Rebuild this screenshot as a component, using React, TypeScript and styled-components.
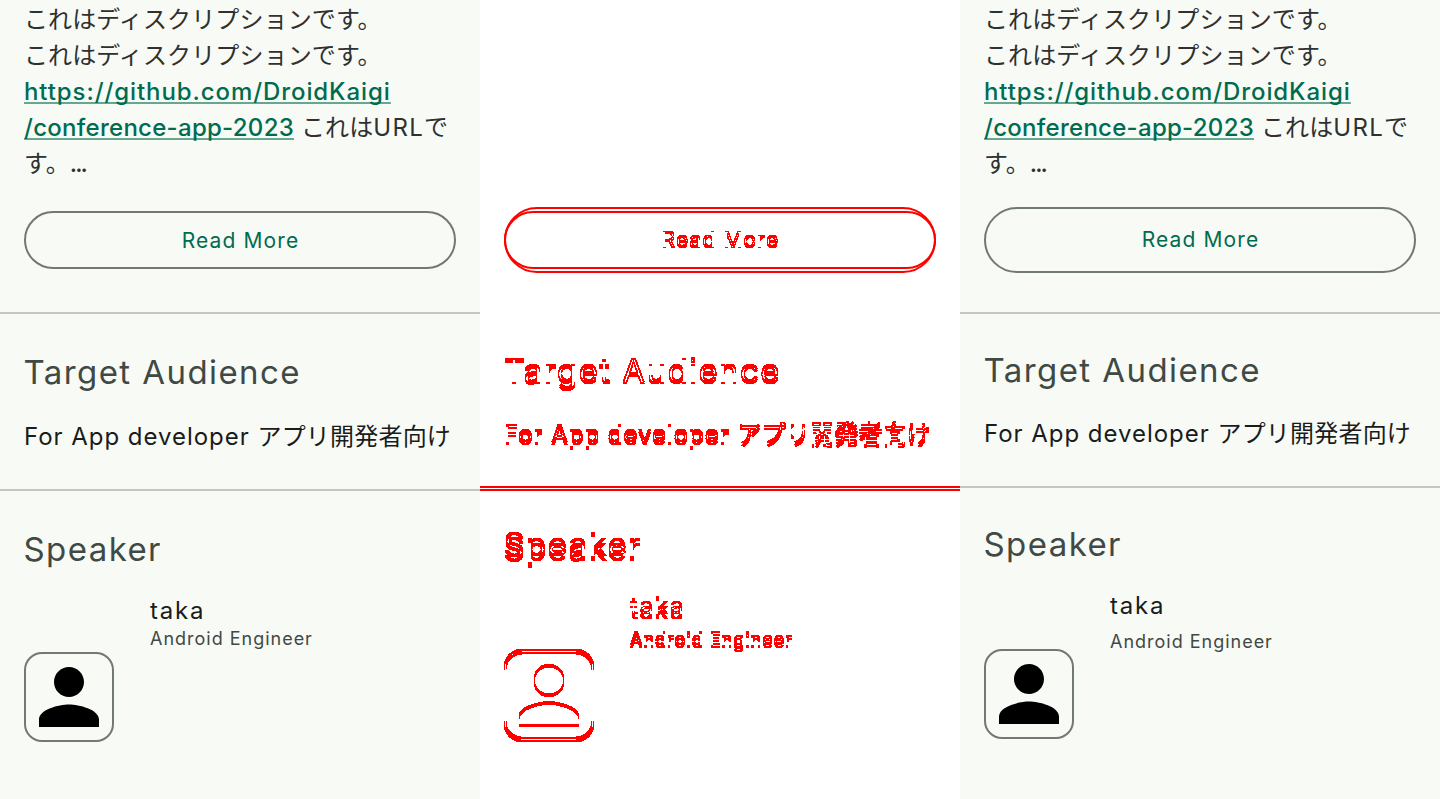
import React from 'react';
import styled, { createGlobalStyle, css } from 'styled-components';

const GlobalStyle = createGlobalStyle`
  *, *::before, *::after { box-sizing: border-box; }
  body { margin: 0; background: #fff; overflow: hidden; }
`;

interface Metrics {
  buttonTop: number;
  buttonHeight: number;
  labelShift: number;
  titleTop: number;
  bodyTop: number;
  roleTop: number;
  avatarTop: number;
}

const before: Metrics = { buttonTop: 29, buttonHeight: 58, labelShift: 2, titleTop: 36, bodyTop: 25, roleTop: 0, avatarTop: 81 };
const after: Metrics = { buttonTop: 25, buttonHeight: 66, labelShift: 0, titleTop: 34, bodyTop: 24, roleTop: 8, avatarTop: 83 };

const Board = styled.main`
  display: grid;
  grid-template-columns: repeat(3, 480px);
  width: 1440px;
  height: 799px;
  overflow: hidden;
  font-family: Inter, 'Noto Sans CJK JP', sans-serif;
`;

const Screen = styled.section`
  --ink: #191c1b;
  --muted: #404944;
  --primary: #006c4f;
  --outline: #707974;
  --rule: #bfc9c2;
  --icon: #000;
  display: flex;
  flex-direction: column;
  padding-top: 2px;
  background: #f8faf6;
`;

const DiffPane = styled(Screen)`
  --ink: #f00;
  --muted: #f00;
  --primary: #f00;
  --outline: #f00;
  --rule: #f00;
  --icon: #f00;
  background: #fff;
`;

/* Shows only the pixels that change when the element moves by $by pixels. */
const moved = css<{ $by?: number }>`
  ${(p) => p.$by !== undefined && css`filter: url(#moved${p.$by});`}
`;

const Description = styled.div`
  height: 180px;
  padding: 0 24px;
  font-size: 24px;
  line-height: 36px;
  color: #2e3130;
  white-space: nowrap;
`;

const Line = styled.div`
  height: 36px;
  letter-spacing: 0.12px;
`;

const Latin = styled.span<{ $spacing: number; $weight?: number }>`
  font-weight: ${(p) => p.$weight ?? 400};
  letter-spacing: ${(p) => p.$spacing}px;
  white-space: pre;
`;

const Link = styled(Latin)`
  color: var(--primary);
  text-decoration: underline 2px #66a78f;
  text-underline-offset: 2px;
  text-decoration-skip-ink: none;
`;

const ReadMore = styled.button<{ $top: number; $height: number; $ghost?: boolean }>`
  flex: none;
  position: relative;
  height: ${(p) => p.$height}px;
  margin: ${(p) => p.$top}px 24px 0;
  padding: 0 0 0 1px;
  border: 2px solid var(--outline);
  border-radius: 999px;
  background: transparent;
  color: var(--primary);
  font: 400 21px/30px Inter, sans-serif;
  letter-spacing: 1.13px;
  ${(p) => p.$ghost && css`
    &::after {
      content: '';
      position: absolute;
      inset: -6px -2px;
      border: 2px solid var(--outline);
      border-radius: 999px;
    }
  `}
`;

const Label = styled.span<{ $shift: number; $by?: number }>`
  display: block;
  padding-top: ${(p) => p.$shift}px;
  ${moved}
`;

const Divider = styled.hr<{ $top: number; $blank?: boolean; $ghost?: boolean }>`
  flex: none;
  width: 100%;
  height: 2px;
  margin: ${(p) => p.$top}px 0 0;
  border: 0;
  background: var(--rule);
  ${(p) => p.$blank && css`visibility: hidden;`}
  ${(p) => p.$ghost && css`box-shadow: 0 -3px var(--rule);`}
`;

const Title = styled.h2<{ $top: number; $by?: number }>`
  flex: none;
  margin: ${(p) => p.$top}px 24px 0 23.5px;
  font-size: 33px;
  font-weight: 400;
  line-height: 44px;
  letter-spacing: 1.42px;
  color: var(--muted);
  ${moved}
`;

const Body = styled.p<{ $top: number; $by?: number }>`
  flex: none;
  margin: ${(p) => p.$top}px 24px 0;
  font-size: 24px;
  line-height: 36px;
  letter-spacing: 0.2px;
  color: var(--ink);
  white-space: nowrap;
  ${moved}
`;

const SpeakerRow = styled.div`
  display: flex;
  gap: 36px;
  padding: 0 24px;
`;

const Avatar = styled.div<{ $top: number; $by?: number }>`
  flex: none;
  display: grid;
  place-items: center;
  width: 90px;
  height: 90px;
  margin-top: ${(p) => p.$top}px;
  border: 2px solid var(--outline);
  border-radius: 18px;
  ${moved}
`;

const PersonIcon = styled.svg`
  display: block;
  width: 60px;
  height: 60px;
  fill: var(--icon);
`;

const SpeakerText = styled.div`
  padding-top: 24px;
`;

const Name = styled.div<{ $by?: number }>`
  font-size: 24px;
  line-height: 32px;
  letter-spacing: 1.8px;
  color: var(--ink);
  ${moved}
`;

const Role = styled.div<{ $top: number; $by?: number }>`
  margin-top: ${(p) => p.$top}px;
  font-size: 18px;
  line-height: 24px;
  letter-spacing: 0.99px;
  color: var(--muted);
  ${moved}
`;

const FilterDefs = styled.svg`
  position: absolute;
  width: 0;
  height: 0;
`;

function MovedFilters() {
  return (
    <FilterDefs aria-hidden>
      {[-5, -3, -2, -1, 3].map((dy) => (
        <filter key={dy} id={`moved${dy}`} x="-5%" y="-30%" width="110%" height="160%" colorInterpolationFilters="sRGB">
          <feOffset in="SourceGraphic" dy={dy} result="shifted" />
          <feComposite in="SourceGraphic" in2="shifted" operator="arithmetic" k1={0} k2={1} k3={-1} k4={0} result="removed" />
          <feComposite in="shifted" in2="SourceGraphic" operator="arithmetic" k1={0} k2={1} k3={-1} k4={0} result="added" />
          <feMerge>
            <feMergeNode in="removed" />
            <feMergeNode in="added" />
          </feMerge>
          <feComponentTransfer result="mask">
            <feFuncA type="discrete" tableValues={['0', ...Array(99).fill('1')].join(' ')} />
          </feComponentTransfer>
          <feFlood floodColor="#f00" />
          <feComposite in2="mask" operator="in" />
        </filter>
      ))}
    </FilterDefs>
  );
}

function SessionDescription() {
  return (
    <Description>
      <Line>これはディスクリプションです。</Line>
      <Line>これはディスクリプションです。</Line>
      <Line><Link $spacing={0.92} $weight={500}>https://github.com/DroidKaigi</Link></Line>
      <Line>
        <Link $spacing={0.28} $weight={500}>/conference-app-2023</Link>
        {' '}これは<Latin $spacing={1.3}>URL</Latin>で
      </Line>
      <Line>す。<Latin $spacing={-1.9} $weight={500}>...</Latin></Line>
    </Description>
  );
}

function SessionDetails({ m, diff }: { m: Metrics; diff?: boolean }) {
  const by = (dy: number) => (diff ? dy : undefined);
  return (
    <>
      <ReadMore $top={m.buttonTop + (diff ? 180 : 0)} $height={m.buttonHeight} $ghost={diff}>
        <Label $shift={m.labelShift} $by={by(-1)}>Read More</Label>
      </ReadMore>
      <Divider $top={130 - m.buttonTop - m.buttonHeight} $blank={diff} />
      <Title $top={m.titleTop} $by={by(-2)}>Target Audience</Title>
      <Body $top={m.bodyTop} $by={by(-3)}><Latin $spacing={0.97}>For App developer </Latin>アプリ開発者向け</Body>
      <Divider $top={34} $ghost={diff} />
      <Title $top={m.titleTop} $by={by(-5)}>Speaker</Title>
      <SpeakerRow>
        <Avatar $top={m.avatarTop} $by={by(-3)}>
          <PersonIcon viewBox="4 4 16 16">
            <path d="M12 12c2.21 0 4-1.79 4-4s-1.79-4-4-4-4 1.79-4 4 1.79 4 4 4zm0 2c-2.67 0-8 1.34-8 4v2h16v-2c0-2.66-5.33-4-8-4z" />
          </PersonIcon>
        </Avatar>
        <SpeakerText>
          <Name $by={by(-5)}>taka</Name>
          <Role $top={m.roleTop} $by={by(3)}>Android Engineer</Role>
        </SpeakerText>
      </SpeakerRow>
    </>
  );
}

export default function App() {
  return (
    <Board>
      <GlobalStyle />
      <Screen>
        <SessionDescription />
        <SessionDetails m={before} />
      </Screen>
      <DiffPane>
        <MovedFilters />
        <SessionDetails m={before} diff />
      </DiffPane>
      <Screen>
        <SessionDescription />
        <SessionDetails m={after} />
      </Screen>
    </Board>
  );
}
